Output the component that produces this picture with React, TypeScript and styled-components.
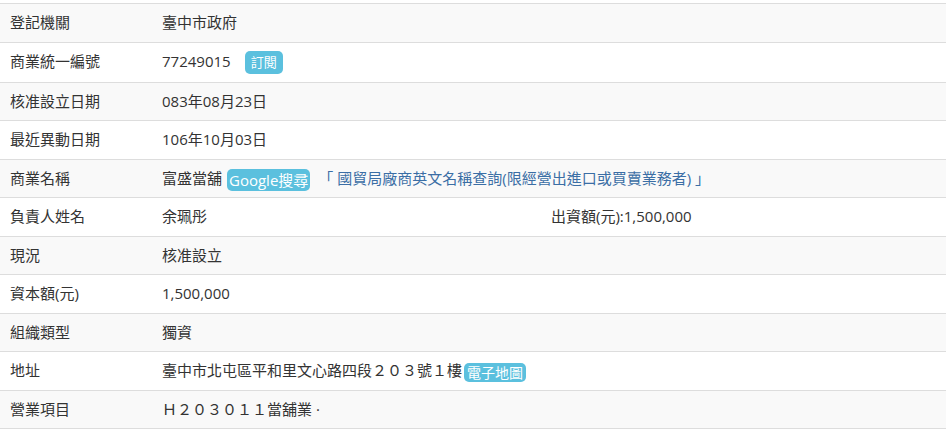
import styled, { createGlobalStyle } from "styled-components";

const GlobalStyle = createGlobalStyle`
  body {
    margin: 0;
    background: #fff;
    font-family: "Open Sans", "Noto Sans CJK TC", sans-serif;
    font-size: 15px;
    color: #333;
  }
`;

const Wrapper = styled.div`
  padding-top: 3px;
`;

const Table = styled.table`
  width: 100%;
  border-collapse: collapse;
  border-bottom: 1px solid #ddd;
`;

const Row = styled.tr`
  &:nth-child(odd) {
    background: #f9f9f9;
  }
`;

const Label = styled.td`
  width: 132px;
  height: 21.5px;
  padding: 8px 10px;
  border-top: 1px solid #ddd;
  line-height: 21.5px;
  vertical-align: middle;
  white-space: nowrap;
`;

const Value = styled.td`
  padding: 8px 10px;
  border-top: 1px solid #ddd;
  line-height: 21.5px;
  vertical-align: middle;
`;

const Split = styled.div`
  display: grid;
  grid-template-columns: 389px 1fr;
`;

const Badge = styled.span<{ size: number; pad: number; height: number; gap: number; grow: number }>`
  display: inline-block;
  background: #5bc0de;
  color: #fff;
  border-radius: 5px;
  font-size: ${(p) => p.size}px;
  padding: 0 ${(p) => p.pad}px;
  height: ${(p) => p.height}px;
  line-height: ${(p) => p.height}px;
  margin: ${(p) => -p.grow}px 0 ${(p) => -p.grow}px ${(p) => p.gap}px;
  vertical-align: middle;
`;

const Link = styled.a`
  color: #3b6ea5;
  text-decoration: none;
  margin-left: 8px;
`;

function App() {
  return (
    <Wrapper>
      <GlobalStyle />
      <Table>
        <tbody>
          <Row>
            <Label>登記機關</Label>
            <Value>臺中市政府</Value>
          </Row>
          <Row>
            <Label>商業統一編號</Label>
            <Value>
              77249015
              <Badge size={13} pad={6} height={23} gap={14} grow={0}>
                訂閱
              </Badge>
            </Value>
          </Row>
          <Row>
            <Label>核准設立日期</Label>
            <Value>083年08月23日</Value>
          </Row>
          <Row>
            <Label>最近異動日期</Label>
            <Value>106年10月03日</Value>
          </Row>
          <Row>
            <Label>商業名稱</Label>
            <Value>
              富盛當舖
              <Badge size={15} pad={2} height={22} gap={5} grow={2}>
                Google搜尋
              </Badge>
              <Link href="#">「 國貿局廠商英文名稱查詢(限經營出進口或買賣業務者) 」</Link>
            </Value>
          </Row>
          <Row>
            <Label>負責人姓名</Label>
            <Value>
              <Split>
                <span>余珮彤</span>
                <span>出資額(元):1,500,000</span>
              </Split>
            </Value>
          </Row>
          <Row>
            <Label>現況</Label>
            <Value>核准設立</Value>
          </Row>
          <Row>
            <Label>資本額(元)</Label>
            <Value>1,500,000</Value>
          </Row>
          <Row>
            <Label>組織類型</Label>
            <Value>獨資</Value>
          </Row>
          <Row>
            <Label>地址</Label>
            <Value>
              臺中市北屯區平和里文心路四段２０３號１樓
              <Badge size={14} pad={3} height={19} gap={2} grow={0}>
                電子地圖
              </Badge>
            </Value>
          </Row>
          <Row>
            <Label>營業項目</Label>
            <Value>Ｈ２０３０１１當舖業 ·</Value>
          </Row>
        </tbody>
      </Table>
    </Wrapper>
  );
}

export default App;
